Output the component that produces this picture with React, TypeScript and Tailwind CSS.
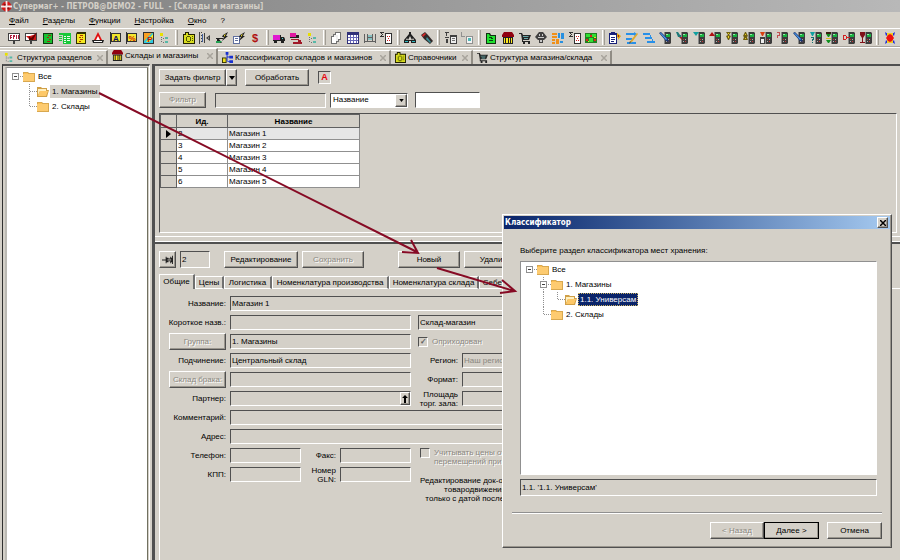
import clsx from "clsx"
import { Fragment } from "react"
import type { ReactNode } from "react"

type Shape = [fill: string, d: string]
type Glyph = { shapes: Shape[]; text?: [value: string, fill: string, x: number, y: number] }

const raised =
  "border border-t-white border-l-white border-r-[#505050] border-b-[#505050] bg-[#d4d0c8] shadow-[inset_-1px_-1px_0_#9a968e]"
const sunken = "border border-t-[#505050] border-l-[#505050] border-r-white border-b-white bg-[#d4d0c8]"
const disabledText = "text-[#8a8780] [text-shadow:1px_1px_0_#fff]"

// handheld terminal, shared by all the "ТСД" buttons
const pda: Shape[] = [
  ["#3c3c3c", "M6 0h5l1 1v10l-1 1h-5l-1-1v-10z"],
  ["#8a8a8a", "M5 1h1v10h-1z"],
  ["#18b040", "M7 2h4v3h-4z"],
  ["#8ef0a0", "M7 2h2v1h-2z"],
  ["#c83030", "M7 7h1v1h-1zM9 9h1v1h-1z"],
  ["#b0b0b0", "M9 7h1v1h-1zM7 9h1v1h-1z"],
]

const treeGlyph: Shape[] = [
  ["#e8e000", "M1 1h3v3h-3z"],
  ["#707070", "M2 5h1v1h-1zM2 7h1v1h-1zM2 9h1v1h-1zM4 6h1v1h-1zM4 10h1v1h-1z"],
  ["#58b8a8", "M6 5h3v2h-3zM6 9h3v2h-3z"],
]

const sumGlyph: Shape[] = [
  ["#303030", "M5 1h7v11h-7z"],
  ["#fff", "M6 2h5v9h-5z"],
  ["#d02020", "M7 4h1v1h-1zM9 4h1v1h-1zM7 8h1v1h-1zM9 8h1v1h-1zM8 6h1v1h-1z"],
  ["#303030", "M0 0h4v1h-4zM1 1h1v1h-1zM2 2h1v1h-1zM1 3h1v1h-1zM0 4h4v1h-4z"],
]

const storeGlyph: Shape[] = [
  ["#900010", "M2 0h8l2 3v2h-12v-2z"],
  ["#202020", "M1 5h10v7h-10z"],
  ["#ffe820", "M2 6h1v5h-1zM4 6h2v5h-2zM7 6h1v5h-1zM9 6h1v5h-1z"],
]

const cartGlyph: Shape[] = [
  ["#252525", "M0 1h3l1 2h8l-2 5h-6v1h7v1h-8v-2l-1-6h-2zM4 10h2v2h-2zM9 10h2v2h-2z"],
  ["#68a8a8", "M4 4h6l-1 1h-5zM5 6h4v1h-4z"],
]

const bookGlyph: Shape[] = [
  ["#202000", "M0 2h12v10h-12zM2 0h4v2h-4z"],
  ["#d8dc20", "M1 3h10v8h-10zM3 1h2v2h-2z"],
  ["#505800", "M4 4h3v1h-3zM3 5h1v4h-1zM7 5h1v4h-1zM4 9h3v1h-3zM9 4h1v1h-1zM9 6h1v1h-1zM9 8h1v1h-1z"],
]

const glyphs: Record<string, Glyph> = {
  epm: {
    shapes: [
      ["#404040", "M0 1h12v8h-12zM5 9h2v3h-2z"],
      ["#fff", "M1 2h10v6h-10z"],
      ["#b02040", "M2 3h2v1h-1v1h1v1h-1v1h-1zM5 3h2v2h-1v2h-1zM8 3h1v4h-1zM10 3h1v4h-1z"],
    ],
  },
  epmRed: {
    shapes: [
      ["#404040", "M0 1h12v8h-12zM5 9h2v3h-2z"],
      ["#fff", "M1 2h10v6h-10z"],
      ["#d01818", "M11 2v6h-6l-4-4h4z"],
      ["#600", "M12 0l-6 6l-2-2v4h4z"],
    ],
  },
  greenDoc: {
    shapes: [
      ["#103810", "M1 1h10v11h-10z"],
      ["#18c030", "M2 2h8v9h-8z"],
      ["#a02810", "M6 3h3v1h-3zM5 5h2v1h-2zM7 7h2v1h-2zM5 9h3v1h-3z"],
    ],
  },
  greenTable: {
    shapes: [
      ["#18c838", "M0 1h12v2h-12zM4 3h8v9h-8zM0 4h3v1h-3zM0 6h3v1h-3zM0 8h3v1h-3z"],
      ["#eaffea", "M5 4h2v1h-2zM8 4h3v1h-3zM5 6h2v1h-2zM8 6h3v1h-3zM5 8h2v1h-2zM8 8h3v1h-3zM5 10h2v1h-2z"],
    ],
  },
  yellowDoc: {
    shapes: [
      ["#303000", "M2 0h9v12h-10v-10z"],
      ["#f4e820", "M2 2h8v9h-8z"],
      ["#b03000", "M5 3h3v1h-3zM4 5h2v1h-2zM7 5h1v1h-1zM5 7h3v1h-3zM4 9h2v1h-2z"],
    ],
  },
  triangle: {
    shapes: [
      ["#e01010", "M6 0l4 8h-8z"],
      ["#fff", "M6 4l2 4h-4z"],
      ["#202020", "M0 8h12l-1 3h-10z"],
      ["#fff", "M2 9h8v1h-8z"],
    ],
  },
  flagA: { shapes: [["#303030", "M1 0h1v12h-1zM2 1h10v9h-10z"], ["#f0e428", "M3 2h8v7h-8z"]], text: ["A", "#101060", 7, 9] },
  flagPercent: { shapes: [["#303030", "M1 0h1v12h-1zM2 1h10v9h-10z"], ["#f4e830", "M3 2h8v7h-8z"]], text: ["%", "#d02000", 7, 9] },
  colorP: {
    shapes: [["#303030", "M1 0h11v12h-11z"], ["#30c8e0", "M2 1h9v10h-9z"], ["#f8a020", "M2 1h8l-8 8z"], ["#f4f020", "M11 2v4l-4 4h-3z"]],
    text: ["P", "#c01010", 8, 10],
  },
  tree: { shapes: treeGlyph },
  book: { shapes: bookGlyph },
  ruler: {
    shapes: [
      ["#404040", "M0 0h1v12h-1zM2 0h1v1h-1zM2 3h1v1h-1zM2 6h1v1h-1zM2 9h1v1h-1zM5 1h1v10h-1zM11 3v6l-4-3z"],
      ["#d4d0c8", "M10 5v2l-1-1z"],
      ["#4060a0", "M3 2h1v8h-1z"],
    ],
  },
  boltGreen: {
    shapes: [
      ["#202020", "M7 3l5-3l-2 4h2l-6 5l2-4h-2zM0 6h7v1h-7zM1 7h2l3 4h-5z"],
      ["#f0e020", "M8 3l2-1l-2 3z"],
      ["#20a050", "M0 9h6l-2 2h-4z"],
    ],
  },
  boltDoc: {
    shapes: [
      ["#6070a0", "M0 4h7v8h-7z"],
      ["#fff", "M1 5h5v6h-5z"],
      ["#6070a0", "M2 6h3v1h-3zM2 8h3v1h-3z"],
      ["#202020", "M7 3l5-3l-2 4h2l-6 5l2-4h-2z"],
      ["#f0e020", "M8 3l2-1l-2 3z"],
    ],
  },
  dollar: { shapes: [], text: ["$", "#b01010", 6, 10] },
  truck: {
    shapes: [
      ["#202020", "M0 3h8v6h-8zM8 5h3l1 2v2h-4zM1 9h3v2h-3zM8 9h3v2h-3z"],
      ["#e018d0", "M0 3h7v5h-7z"],
      ["#50d8d8", "M9 6h1v1h-1z"],
    ],
  },
  truckRoute: {
    shapes: [
      ["#202020", "M0 2h6v4h-6zM6 3h3v3h-3z"],
      ["#e018a0", "M0 1h6v4h-6z"],
      ["#a01828", "M1 7h8v1h-8zM8 8h3v2h-3zM3 10h9v2h-9z"],
    ],
  },
  copies: {
    shapes: [
      ["#707070", "M5 0h6v8h-6zM3 2h6v8h-6zM1 4h6v8h-6z"],
      ["#fff", "M6 1h4v6h-4z"],
      ["#eee", "M4 3h4v6h-4z"],
      ["#fff", "M2 5h4v6h-4z"],
    ],
  },
  blueTable: {
    shapes: [
      ["#303078", "M0 0h12v12h-12z"],
      ["#fff", "M1 3h10v8h-10z"],
      ["#6868b8", "M1 5h10v1h-10zM1 8h10v1h-10zM3 3h1v8h-1zM6 3h1v8h-1zM9 3h1v8h-1z"],
    ],
  },
  film: {
    shapes: [
      ["#606060", "M0 2h1v9h-1zM11 2h1v9h-1zM0 9h12v1h-12zM3 2h1v8h-1zM8 2h1v8h-1zM3 5h6v1h-6z"],
      ["#88c0c0", "M4 3h4v2h-4zM4 6h4v2h-4z"],
    ],
  },
  sum: { shapes: sumGlyph },
  scales: {
    shapes: [
      ["#202020", "M5 0h2v2l5 6v3h-5v-2h-2v2h-5v-3l5-6z"],
      ["#d4d0c8", "M6 4l2 4h-4zM3 6l1 2h-2zM9 6l1 2h-2z"],
      ["#30b8c0", "M1 9h3v1h-3zM8 9h3v1h-3z"],
    ],
  },
  torch: {
    shapes: [
      ["#302828", "M0 3l4-3l3 3l5 6l-3 3l-6-5z"],
      ["#d82828", "M1 3l3-2l1 1l-3 3z"],
      ["#389098", "M6 5l4 5l-1 1l-4-4z"],
    ],
  },
  docList: {
    shapes: [
      ["#404040", "M0 0h4v1h-4zM1 1h1v3h-1zM0 5h4v1h-4zM1 7h2v4h-2zM5 3h7v9h-7z"],
      ["#eee", "M6 5h5v6h-5z"],
      ["#707070", "M7 6h3v1h-3zM7 8h3v1h-3z"],
    ],
  },
  docLink: {
    shapes: [
      ["#909090", "M0 0h1v4h3v1h-4zM5 4h7v8h-7z"],
      ["#f4f4f4", "M6 5h5v6h-5z"],
      ["#50b8b8", "M7 6h3v3h-3z"],
    ],
  },
  greenFolder: {
    shapes: [
      ["#103010", "M1 1h4l1 2h5v9h-10z"],
      ["#20e030", "M2 2h2l1 2h5v7h-8z"],
      ["#084010", "M4 5h3v1h-3zM6 6h2v1h-2zM4 8h4v1h-4z"],
    ],
  },
  store: { shapes: storeGlyph },
  cart: { shapes: cartGlyph },
  robot: {
    shapes: [
      ["#404040", "M4 0h4l4 5l-3 3h-1v3h-4v-3h-1l-3-3z"],
      ["#c8c8c8", "M4 2h1v2h-1zM7 2h1v2h-1zM3 5h6v1h-6zM5 8h2v2h-2z"],
    ],
  },
  blocks: {
    shapes: [
      ["#f09018", "M0 1h5v2h-5zM0 4h5v2h-5zM0 7h3v2h-3zM0 10h3v2h-3zM4 7h3v5h-3z"],
      ["#2890e0", "M6 1h2v5h-2zM9 1h3v6h-3zM8 9h3v2h-3z"],
    ],
  },
  map: {
    shapes: [
      ["#208020", "M0 1h12v10h-12z"],
      ["#30e030", "M1 2h4v3h-4zM7 2h4v3h-4zM4 6h4v4h-4z"],
      ["#e02020", "M5 3h2v2h-2zM1 7h2v2h-2zM9 7h2v2h-2z"],
      ["#f0e020", "M9 5h2v1h-2zM3 9h1v1h-1z"],
    ],
  },
  clipboard: {
    shapes: [
      ["#182078", "M0 1h8v11h-8z"],
      ["#fff", "M1 3h6v8h-6z"],
      ["#182078", "M2 5h4v1h-4zM2 7h4v1h-4zM2 9h3v1h-3zM2 0h4v2h-4z"],
      ["#e8a800", "M8 1l4 3l-3 4v-2l-1-1z"],
      ["#a02020", "M9 3h1v2h-1z"],
    ],
  },
  arrowsPencil: {
    shapes: [
      ["#2890e8", "M0 1h8v-1l3 2l-3 2v-1h-8zM0 6h6v2h-6zM1 10h9v2h-9z"],
      ["#e0a828", "M11 1l1 1l-6 8l-2 1l1-3z"],
      ["#504020", "M4 9l1 1l-2 2z"],
    ],
  },
  steps: { shapes: [["#2890e8", "M0 1h7v2h-7zM2 5h7v2h-7zM4 9h8v2h-8zM7 3h1v2h-1zM9 7h1v2h-1z"]] },
  pdaPen: { shapes: [...pda, ["#183878", "M0 1l2-1l7 7l1 3l-3-1z"], ["#50a0f0", "M1 1h1l6 6l-1 1z"]] },
  pdaIn: { shapes: [...pda, ["#207878", "M0 0h2l2 3h1v2h-3z"], ["#a02020", "M3 5h3v3z"]] },
  pdaDown: { shapes: [...pda, ["#10a0a0", "M0 0h6l-3 4z"]] },
  pdaUp: { shapes: [...pda, ["#b01010", "M0 4h6l-3-4z"]] },
  pdaYellow: { shapes: [...pda, ["#706010", "M0 0h5l-2 3l2 1l-2 4h-1l-2-4l2-1z"], ["#e8d020", "M2 1h1v1h-1zM2 4h1v2h-1z"]] },
  pdaYellowUp: { shapes: [...pda, ["#706010", "M0 4l2-4h1l2 4l-1 1l1 3h-5l1-3z"], ["#e8d020", "M2 2h1v1h-1zM2 6h1v1h-1z"]] },
  pdaFilter: { shapes: [...pda, ["#d84010", "M0 0h5l-2 4h-1z"], ["#404040", "M0 5h5v7h-5z"], ["#eee", "M1 7h3v4h-3z"]] },
  pdaFlag: { shapes: [...pda, ["#c05050", "M1 0h3v1h-3zM3 1h1v2h-1zM1 3h3v1h-3zM1 4h1v2h-1z"]] },
  pdaAsk: { shapes: [...pda, ["#10a0a0", "M0 0h5l-2 4h-1z"], ["#107070", "M1 5h3v3h-1v1h-1v-2h1v-1h-2zM2 10h1v1h-1z"]] },
  pdaSwap: { shapes: [...pda, ["#382010", "M0 0h5v2h-5z"], ["#109020", "M0 2h5l-2 3h-1zM0 8h5l-2 3h-1z"], ["#d8c020", "M0 6h5v1h-5z"]] },
  pdaRed: { shapes: [...pda, ["#d02020", "M0 3h1v5h-1zM1 3h2v1h-2zM1 7h2v1h-2zM3 4h1v3h-1zM4 5h3v1h-3z"]] },
  pdaGlass: { shapes: [...pda, ["#801018", "M0 0h5v3l-2 3v4h2v1h-5v-1h2v-4l-2-3z"]] },
  star: {
    shapes: [
      ["#1828e0", "M1 0l3 2l-2 2zM11 0l-3 2l2 2zM1 12l3-2l-2-2zM11 12l-3-2l2-2z"],
      ["#f0d020", "M3 1h6v10h-6z"],
      ["#f01010", "M6 2l2 1l2 3l-2 3l-2 1l-2-1l-2-3l2-3z"],
    ],
  },
  classifier: {
    shapes: [
      ["#303000", "M0 6h5v6h-5z"],
      ["#f0e020", "M1 7h3v4h-3z"],
      ["#1830d0", "M4 0h3v3h-3zM8 4h4v3h-4zM8 9h4v3h-4zM5 3h1v7h-1zM6 5h2v1h-2zM6 10h2v1h-2z"],
    ],
  },
  folder: { shapes: [["#d8a850", "M0 1h5l1 1h6v9h-12z"], ["#fdcb70", "M0 3h11v7h-11z"], ["#ffc050", "M1 2h4v1h-4z"]] },
  folderOpen: { shapes: [["#d0a048", "M0 1h4l1 1h5v2h2l-2 7h-10z"], ["#fff0c0", "M1 3h8v2h-6l-2 4z"], ["#fdc868", "M3 5h8l-2 5h-8z"]] },
  pin: { shapes: [["#202020", "M0 6h4v1h-4zM4 3h1v7h-1zM5 4h2v1h2v-2h1v1h1v-2h1v9h-1v-2h-1v1h-1v-2h-2v1h-2z"], ["#d4d0c8", "M6 6h4v1h-4z"]] },
}

const toolbar = [
  ["epm", "epmRed", "greenDoc", "greenTable", "yellowDoc", "triangle", "flagA", "flagPercent", "colorP", "tree"],
  ["book", "ruler", "boltGreen", "boltDoc", "dollar"],
  ["truck", "truckRoute", "tree"],
  ["copies", "blueTable", "film", "sum"],
  ["scales", "torch"],
  ["docList", "docLink"],
  ["greenFolder", "store", "cart", "robot", "blocks", "sum", "map"],
  [
    "clipboard",
    "arrowsPencil",
    "steps",
    "pdaPen",
    "pdaIn",
    "pdaDown",
    "pdaUp",
    "pdaYellow",
    "pdaYellowUp",
    "pdaFilter",
    "pdaFlag",
    "pdaPen",
    "pdaAsk",
    "pdaSwap",
    "pdaRed",
    "pdaGlass",
  ],
  ["star"],
]

const menu = ["Файл", "Разделы", "Функции", "Настройка", "Окно", "?"]

const windows = [
  { title: "Структура разделов", icon: "tree", width: "w-[108px]" },
  { title: "Склады и магазины", icon: "store", width: "w-[110px]", active: true },
  { title: "Классификатор складов и магазинов", icon: "classifier", width: "w-[173px]" },
  { title: "Справочники", icon: "book", width: "w-[82px]" },
  { title: "Структура магазина/склада", icon: "cart", width: "w-[139px]" },
]

const stores = [
  { id: 2, name: "Магазин 1" },
  { id: 3, name: "Магазин 2" },
  { id: 4, name: "Магазин 3" },
  { id: 5, name: "Магазин 4" },
  { id: 6, name: "Магазин 5" },
]

function Icon({ name, className = "size-3" }: { name: string; className?: string }) {
  const { shapes, text } = glyphs[name]

  return (
    <svg viewBox="0 0 12 12" className={clsx("shrink-0", className)} aria-hidden="true">
      {shapes.map(([fill, d], i) => (
        <path key={i} fill={fill} d={d} />
      ))}
      {text && (
        <text
          x={text[2]}
          y={text[3]}
          fill={text[1]}
          textAnchor="middle"
          fontSize={text[0] === "$" ? 11 : 8}
          fontWeight="bold"
          fontFamily="Liberation Sans, sans-serif"
        >
          {text[0]}
        </text>
      )}
    </svg>
  )
}

type Branch = "none" | "line" | "tee" | "end" | "root" | "node"

function Connector({ kind }: { kind: Branch }) {
  const box = kind === "root" || kind === "node"

  return (
    <svg viewBox="0 0 14 15" className="h-[15px] w-[14px] shrink-0" aria-hidden="true">
      <g stroke="#909090" strokeDasharray="1 1" fill="none">
        {(kind === "line" || kind === "tee" || kind === "node") && <path d="M6.5 0v15" />}
        {kind === "end" && <path d="M6.5 0v8" />}
        {kind !== "none" && kind !== "line" && <path d="M7 7.500h7" />}
      </g>
      {box && (
        <g>
          <path fill="#909090" d="M3 4h7v7h-7z" />
          <path fill="#fff" d="M4 5h5v5h-5z" />
          <path fill="#404040" d="M5 7h3v1h-3z" />
        </g>
      )}
    </svg>
  )
}

type NodeProps = { branches: Branch[]; label: string; open?: boolean; highlight?: string }

function TreeRow({ branches, label, open, highlight }: NodeProps) {
  return (
    <li className="flex h-[15px] items-center">
      {branches.map((kind, i) => (
        <Connector key={i} kind={kind} />
      ))}
      <Icon name={open ? "folderOpen" : "folder"} />
      <span className={clsx("ml-px px-[2px] leading-[13px] whitespace-nowrap", highlight)}>{label}</span>
    </li>
  )
}

function Button({ children, className, disabled }: { children: ReactNode; className?: string; disabled?: boolean }) {
  return (
    <button
      type="button"
      disabled={disabled}
      className={clsx("flex items-center justify-center whitespace-nowrap", raised, disabled && disabledText, className)}
    >
      {children}
    </button>
  )
}

type FieldProps = { id: string; value?: string; className?: string }

function Field({ id, value = "", className }: FieldProps) {
  return (
    <input
      id={id}
      aria-label={id}
      readOnly
      defaultValue={value}
      className={clsx("h-[15px] min-w-0 pl-px outline-none", sunken, className)}
    />
  )
}

function Label({ id, children, className = "w-[62px]" }: { id: string; children: ReactNode; className?: string }) {
  return (
    <label htmlFor={id} className={clsx("flex shrink-0 items-center justify-end text-right leading-[9px]", className)}>
      {children}
    </label>
  )
}

function Row({ children }: { children: ReactNode }) {
  return <div className="flex h-[15px] items-center gap-1">{children}</div>
}

function Check({ id, checked }: { id: string; checked?: boolean }) {
  return (
    <input
      id={id}
      type="checkbox"
      disabled
      defaultChecked={checked}
      className={clsx(
        "flex size-[10px] shrink-0 appearance-none items-center justify-center font-bold text-[#606060] checked:before:content-['✓']",
        sunken
      )}
    />
  )
}

function TopBars() {
  return (
    <header>
      <div className="flex h-[12px] items-center gap-px bg-linear-to-r from-[#808080] to-[#b8b8b8]">
        <svg viewBox="0 0 12 12" className="ml-px size-[11px]" aria-hidden="true">
          <circle cx="6" cy="6" r="5.500" fill="#d81818" />
          <path d="M5 0h2v5h5v2h-5v5h-2v-5h-5v-2h5z" fill="#f4e8e8" />
          <path d="M3 3h2v2h-2zM7 7h2v2h-2z" fill="#801010" />
        </svg>
        <h1 className="font-['DejaVu_Sans_Condensed','DejaVu_Sans',sans-serif] text-[8px] leading-[11px] font-bold whitespace-pre text-[#d4d0c8]">
          Супермаг+ - ПЕТРОВ@DEMO2 - FULL  - [Склады и магазины]
        </h1>
      </div>

      <nav className="flex h-4 items-center gap-[14px] pt-[2px] pl-[9px]">
        {menu.map((item) => (
          <button key={item} type="button" className="first-letter:underline">
            {item}
          </button>
        ))}
      </nav>

      <div className="flex h-[19px] items-center border-t border-b border-t-white border-b-[#a8a49c] pr-[2px] pl-[6px]">
        {toolbar.map((group, i) => (
          <Fragment key={i}>
            {i > 0 && <span className="mx-[2px] h-[15px] w-[3px] shrink-0 border-r border-l border-r-[#a09c94] border-l-white" />}
            <div className="flex basis-0 items-center" style={{ flexGrow: group.length }}>
              {group.map((name, j) => (
                <button key={j} type="button" aria-label={name} className="flex min-w-0 flex-1 justify-center">
                  <Icon name={name} />
                </button>
              ))}
            </div>
          </Fragment>
        ))}
      </div>

      <div className="flex h-[17px] items-end border-t border-t-white">
        {windows.map((win) => (
          <div
            key={win.title}
            className={clsx(
              "flex shrink-0 items-center gap-[2px] border-t border-t-white border-r-2 border-r-[#908c84] pr-[3px] pl-[4px]",
              win.width,
              win.active ? "h-4 pb-[2px]" : "h-[14px]"
            )}
          >
            <Icon name={win.icon} className="size-[11px]" />
            <button type="button" className="whitespace-nowrap">
              {win.title}
            </button>
            <button type="button" aria-label="Закрыть" className="ml-auto">
              <svg viewBox="0 0 6 6" className="size-[6px]" aria-hidden="true">
                <path d="M0 0l6 6M6 0l-6 6" stroke="#a8a49c" strokeWidth="1.500" />
              </svg>
            </button>
          </div>
        ))}
      </div>
    </header>
  )
}

function StoreList() {
  return (
    <section className="flex flex-col pt-[3px] pr-[3px] pl-1">
      <div className="flex h-[17px] items-center">
        <Button className="h-[17px] w-[67px]">Задать фильтр</Button>
        <Button className="h-[17px] w-[11px]">
          <svg viewBox="0 0 6 4" className="h-[4px] w-[6px] shrink-0" aria-label="Ещё">
            <path d="M0 0h6l-3 4z" />
          </svg>
        </Button>
        <Button className="ml-2 h-[17px] w-[64px]">Обработать</Button>
        <button type="button" className={clsx("ml-[9px] size-[13px] text-[9px] leading-[11px] font-bold text-red-600", sunken)}>
          A
        </button>
      </div>

      <div className="mt-[6px] flex h-4 items-center">
        <Button className="h-4 w-[47px]" disabled>
          Фильтр
        </Button>
        <Field id="Фильтр" className="ml-[9px] h-4 w-[111px]" />
        <div className="relative ml-1 w-[78px]">
          <select aria-label="Поле поиска" className={clsx("h-[15px] w-full appearance-none pl-[2px]", sunken, "bg-white")}>
            <option>Название</option>
          </select>
          <span className={clsx("pointer-events-none absolute top-px right-px flex h-[13px] w-3 items-center justify-center", raised)}>
            <svg viewBox="0 0 6 4" className="h-[3px] w-[5px]" aria-hidden="true">
              <path d="M0 0h6l-3 4z" />
            </svg>
          </span>
        </div>
        <input aria-label="Значение" className={clsx("ml-[7px] h-4 w-[65px]", sunken, "bg-white")} />
      </div>

      <div className={clsx("mt-[5px] h-[120px]", sunken)}>
        <table className="w-[199px] table-fixed border-collapse leading-[9px]">
          <thead>
            <tr className="h-[13px]">
              <th className="w-[16px] border border-[#606060]" />
              <th className="w-[51px] border border-[#606060]">Ид.</th>
              <th className="w-[132px] border border-[#606060]">Название</th>
            </tr>
          </thead>
          <tbody>
            {stores.map((store, i) => (
              <tr key={store.id} className={clsx("h-[12px]", i === 0 ? "bg-[#e6e6e6]" : "bg-white")}>
                <td className="border border-[#606060] bg-[#d4d0c8] p-0">
                  {i === 0 && (
                    <svg viewBox="0 0 5 8" className="m-auto h-2 w-[5px]" aria-label="Текущая строка">
                      <path d="M0 0l5 4l-5 4z" />
                    </svg>
                  )}
                </td>
                <td className="border border-[#909090] p-0 pl-px">{store.id}</td>
                <td className="border border-[#909090] p-0 pl-px">{store.name}</td>
              </tr>
            ))}
          </tbody>
        </table>
      </div>
    </section>
  )
}

const tabs = [
  { title: "Общие", width: "w-[36px]", active: true },
  { title: "Цены", width: "w-[29px]" },
  { title: "Логистика", width: "w-[48px]" },
  { title: "Номенклатура производства", width: "w-[117px]" },
  { title: "Номенклатура склада", width: "w-[90px]" },
  { title: "Себестоимость", width: "w-[66px]" },
]

function StoreCard() {
  return (
    <section className="flex flex-1 flex-col pt-[7px] pl-1">
      <div className="flex h-[17px] items-center">
        <Button className="h-[17px] w-[17px]">
          <Icon name="pin" className="size-[11px]" />
        </Button>
        <Field id="Ид." value="2" className="ml-1 h-[17px] w-[30px]" />
        <Button className="ml-[14px] h-[17px] w-[74px]">Редактирование</Button>
        <Button className="ml-1 h-[17px] w-[62px]" disabled>
          Сохранить
        </Button>
        <Button className="ml-[34px] h-[17px] w-[62px]">Новый</Button>
        <Button className="ml-1 h-[17px] w-[62px]">Удалить</Button>
      </div>

      <div className="mt-[6px] flex h-[15px] items-end" role="tablist">
        {tabs.map((tab) => (
          <button
            key={tab.title}
            type="button"
            role="tab"
            aria-selected={!!tab.active}
            className={clsx(
              "shrink-0 border-t border-r-2 border-l border-t-white border-r-[#707070] border-l-white whitespace-nowrap",
              tab.width,
              tab.active ? "h-[15px] pb-px" : "h-[13px] border-b border-b-white"
            )}
          >
            {tab.title}
          </button>
        ))}
        <span className="h-px flex-1 bg-white" />
      </div>

      <div className="flex flex-1 flex-col gap-[4px] border-l border-white pt-[7px] pr-4 pl-1">
        <Row>
          <Label id="name">Название:</Label>
          <Field id="name" value="Магазин 1" className="flex-1" />
        </Row>
        <Row>
          <Label id="short">Короткое назв.:</Label>
          <Field id="short" className="w-[181px]" />
          <Field id="kind" value="Склад-магазин" className="ml-[3px] flex-1" />
        </Row>
        <Row>
          <div className="flex w-[62px] justify-end">
            <Button className="h-[17px] w-[57px]" disabled>
              Группа:
            </Button>
          </div>
          <Field id="group" value="1. Магазины" className="w-[181px]" />
          <div className="ml-[3px] flex items-center gap-1">
            <Check id="booked" checked />
            <label htmlFor="booked" className={disabledText}>
              Оприходован
            </label>
          </div>
        </Row>
        <Row>
          <Label id="parent">Подчинение:</Label>
          <Field id="parent" value="Центральный склад" className="w-[181px]" />
          <Label id="region" className="w-[43px]">
            Регион:
          </Label>
          <Field id="region" value="Наш регион" className="flex-1 text-[#8a8780]" />
        </Row>
        <Row>
          <div className="flex w-[62px] justify-end">
            <Button className="h-[17px] w-[57px]" disabled>
              Склад брака:
            </Button>
          </div>
          <Field id="defects" className="w-[181px]" />
          <Label id="format" className="w-[43px]">
            Формат:
          </Label>
          <Field id="format" className="flex-1" />
        </Row>
        <Row>
          <Label id="partner">Партнер:</Label>
          <div className={clsx("flex h-[15px] w-[181px]", sunken)}>
            <input id="partner" readOnly className="min-w-0 flex-1 pl-px outline-none" />
            <Button className="h-[13px] w-[10px]">
              <svg viewBox="0 0 6 8" className="h-2 w-[6px] shrink-0" aria-label="Выбрать">
                <path d="M3 0l3 3h-2v5h-2v-5h-2z" />
              </svg>
            </Button>
          </div>
          <Label id="area" className="w-[43px]">
            Площадь
            <br />
            торг. зала:
          </Label>
          <Field id="area" className="flex-1" />
        </Row>
        <Row>
          <Label id="comment">Комментарий:</Label>
          <Field id="comment" className="flex-1" />
        </Row>
        <Row>
          <Label id="address">Адрес:</Label>
          <Field id="address" className="flex-1" />
        </Row>
        <div className="flex gap-[9px]">
          <div className="flex flex-col gap-[4px]">
            <Row>
              <Label id="phone">Телефон:</Label>
              <Field id="phone" className="w-[71px]" />
              <Label id="fax" className="w-[31px]">
                Факс:
              </Label>
              <Field id="fax" className="w-[71px]" />
            </Row>
            <Row>
              <Label id="kpp">КПП:</Label>
              <Field id="kpp" className="w-[71px]" />
              <Label id="gln" className="w-[31px]">
                Номер
                <br />
                GLN:
              </Label>
              <Field id="gln" className="w-[71px]" />
            </Row>
          </div>
          <div className="leading-[9px] whitespace-nowrap">
            <div className="flex gap-1">
              <Check id="prices" />
              <label htmlFor="prices" className={disabledText}>
                Учитывать цены от
                <br />
                перемещений при
              </label>
            </div>
            <p className="mt-[10px] w-[110px] text-center">
              Редактирование док-ов учёта
              <br />
              товародвижения
              <br />
              только с датой последнего
            </p>
          </div>
        </div>
      </div>
    </section>
  )
}

function ClassifierDialog() {
  return (
    <div
      role="dialog"
      aria-label="Классификатор"
      className="absolute top-[214px] left-[502px] flex w-[390px] flex-col border border-t-white border-r-[#505050] border-b-[#505050] border-l-white bg-[#d4d0c8] p-px shadow-[inset_-1px_-1px_0_#9a968e]"
    >
      <div className="flex h-[13px] items-center justify-between bg-linear-to-r from-[#0a246a] to-[#a6caf0] pr-[2px] pl-px">
        <h2 className="font-['DejaVu_Sans_Condensed','DejaVu_Sans',sans-serif] text-[8px] font-bold text-white">Классификатор</h2>
        <button type="button" aria-label="Закрыть" className={clsx("flex size-[11px] items-center justify-center", raised)}>
          <svg viewBox="0 0 6 6" className="size-[6px] shrink-0" aria-hidden="true">
            <path d="M0 0l6 6M6 0l-6 6" stroke="#000" strokeWidth="1.500" />
          </svg>
        </button>
      </div>

      <div className="flex flex-col pt-[17px] pr-[13px] pl-4">
        <p className="leading-[10px]">Выберите раздел классификатора мест хранения:</p>
        <ul className="mt-[5px] h-[214px] border border-t-[#909090] border-r-white border-b-white border-l-[#909090] bg-white pl-[2px]">
          <TreeRow branches={["root"]} label="Все" />
          <TreeRow branches={["none", "node"]} label="1. Магазины" />
          <TreeRow
            branches={["none", "line", "end"]}
            label="1.1. Универсам"
            open
            highlight="bg-[#0a246a] text-white outline-1 -outline-offset-1 outline-dotted outline-[#c8b060]"
          />
          <TreeRow branches={["none", "end"]} label="2. Склады" />
        </ul>
        <Field id="Раздел" value="1.1. '1.1. Универсам'" className="mt-1 h-[17px]" />
      </div>

      <div className="mx-2 mt-4 flex justify-end border-t border-[#909090] pt-[9px] pb-[7px] shadow-[inset_0_1px_0_#fff]">
        <Button className="h-[17px] w-[54px]" disabled>
          &lt; Назад
        </Button>
        <Button className="h-[17px] w-[55px] outline-1 -outline-offset-1 outline-black">Далее &gt;</Button>
        <Button className="ml-2 h-[17px] w-[55px]">Отмена</Button>
      </div>
    </div>
  )
}

export default function App() {
  return (
    <div className="relative flex min-h-screen w-full flex-col overflow-hidden bg-[#d4d0c8] font-['Liberation_Sans',Arial,sans-serif] text-[8px] leading-[10px] text-black">
      <TopBars />

      <div className="flex flex-1">
        <aside className="ml-[2px] flex w-[148px] shrink-0 border-t-2 border-r border-l border-t-[#505050] border-r-white border-l-[#303030] pr-px pl-[2px]">
          <ul className="mt-px flex-1 border-t border-r border-l-2 border-t-[#909090] border-r-[#707060] border-l-[#bcbab4] bg-white pt-px pl-[2px]">
            <TreeRow branches={["root"]} label="Все" />
            <TreeRow branches={["none", "tee"]} label="1. Магазины" open highlight="bg-[#d4d0c8]" />
            <TreeRow branches={["none", "end"]} label="2. Склады" />
          </ul>
        </aside>

        <main className="ml-[2px] flex min-w-0 flex-1 flex-col border-t-2 border-l-[3px] border-[#505050]">
          <StoreList />
          <div className="mt-[3px] h-[6px] border-t border-b border-white" />
          <div className="h-[2px] bg-[#505050]" />
          <StoreCard />
        </main>
      </div>

      <ClassifierDialog />

      {/* pointer arrows from the section to the button and on to the dialog */}
      <svg
        viewBox="0 0 900 560"
        className="pointer-events-none absolute top-0 left-0 h-[560px] w-[900px]"
        fill="none"
        stroke="#860a24"
        strokeWidth="2"
        aria-hidden="true"
      >
        <path d="M99 93L417 252M411 240L418 253L402 252" />
        <path d="M437 268L514 291M502 280L515 291L500 293" />
      </svg>
    </div>
  )
}
